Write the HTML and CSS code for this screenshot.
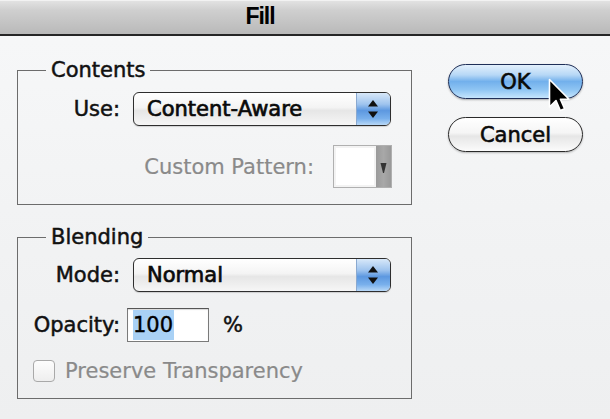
FILE: index.html
```html
<!DOCTYPE html>
<html>
<head>
<meta charset="utf-8">
<title>Fill</title>
<link rel="stylesheet" href="styles.css">
</head>
<body>
<div class="window">
  <div class="titlebar"><span class="title">Fill</span></div>
  <div class="main">
    <div class="groups">
      <fieldset class="group group-contents">
        <legend class="legend">Contents</legend>
        <div class="row">
          <span class="label">Use:</span>
          <div class="popup">
            <span class="popup-text">Content-Aware</span>
            <span class="stepper">
              <svg width="34" height="34" viewBox="0 0 34 34"><path d="M12 14.5 L17 8 L22 14.5 Z" fill="#111"/><path d="M12 19.5 L17 26 L22 19.5 Z" fill="#111"/></svg>
            </span>
          </div>
        </div>
        <div class="row row-pattern">
          <span class="label-dim">Custom Pattern:</span>
          <div class="pattern">
            <span class="swatch"></span>
            <span class="pattern-arrow">
              <svg width="15" height="41" viewBox="0 0 15 41"><path d="M4.5 17 L10.5 17 L8 27 L7 27 Z" fill="#333"/></svg>
            </span>
          </div>
        </div>
      </fieldset>
      <fieldset class="group group-blending">
        <legend class="legend">Blending</legend>
        <div class="row">
          <span class="label">Mode:</span>
          <div class="popup">
            <span class="popup-text">Normal</span>
            <span class="stepper">
              <svg width="34" height="34" viewBox="0 0 34 34"><path d="M12 14.5 L17 8 L22 14.5 Z" fill="#111"/><path d="M12 19.5 L17 26 L22 19.5 Z" fill="#111"/></svg>
            </span>
          </div>
        </div>
        <div class="row row-opacity">
          <span class="label">Opacity:</span>
          <div class="field"><span class="selected">100</span></div>
          <span class="unit">%</span>
        </div>
        <div class="row row-check">
          <span class="checkbox"></span>
          <span class="label-dim">Preserve Transparency</span>
        </div>
      </fieldset>
    </div>
    <div class="buttons">
      <button class="btn btn-ok">OK</button>
      <button class="btn btn-cancel">Cancel</button>
      <svg class="cursor" width="24" height="36" viewBox="0 0 24 36">
        <path d="M1.5 1.5 L1.5 29 L8 22.5 L12.3 32.5 L16.6 30.7 L12.4 21.2 L21 21.2 Z" fill="#000" stroke="#fff" stroke-width="1.6" stroke-linejoin="round"/>
      </svg>
    </div>
  </div>
</div>
</body>
</html>
```
FILE: styles.css
```css
* { box-sizing: border-box; }
html, body { margin: 0; padding: 0; }
body {
  width: 610px;
  height: 419px;
  overflow: hidden;
  font-family: "DejaVu Sans", "Liberation Sans", sans-serif;
  background: #f2f3f4;
}
.window {
  width: 610px;
  height: 419px;
  display: flex;
  flex-direction: column;
  background: linear-gradient(180deg, #f7f8f9 0%, #f1f2f3 60%, #eeeff0 100%);
}
.titlebar {
  height: 36px;
  flex: none;
  display: flex;
  align-items: center;
  justify-content: center;
  padding-right: 90px;
  padding-bottom: 2px;
  background: linear-gradient(180deg, #e4e4e4 0%, #cfcfcf 30%, #b9b9b9 100%);
  border-bottom: 2px solid #262626;
  box-shadow: inset 0 1px 0 #f2f2f2;
}
.title {
  font-family: "Liberation Sans", "DejaVu Sans", sans-serif;
  font-weight: bold;
  font-size: 23px;
  letter-spacing: -1px;
  color: #000;
}
.main {
  flex: 1;
  display: flex;
  align-items: flex-start;
}
.groups {
  display: flex;
  flex-direction: column;
  gap: 20px;
  padding-left: 17px;
  padding-top: 22px;
}
.group {
  margin: 0;
  width: 395px;
  border: 1px solid #6c6c6c;
  padding: 10px 19px 16px 0;
  min-width: 0;
}
.group-contents { padding-bottom: 16px; }
.group-blending { padding-top: 9px; padding-bottom: 15px; }
.legend {
  margin-left: 28px;
  padding: 0 5px;
  font-size: 21px;
  line-height: 24px;
  color: #111;
  -webkit-text-stroke: 0.5px #111;
}
.row {
  display: flex;
  align-items: center;
  gap: 13px;
}
.label {
  width: 102px;
  text-align: right;
  font-size: 21px;
  color: #111;
  -webkit-text-stroke: 0.5px #111;
  flex: none;
  white-space: nowrap;
}
.label-dim {
  font-size: 21px;
  color: #8a8a8a;
  -webkit-text-stroke: 0.2px #8a8a8a;
  white-space: nowrap;
}
.popup {
  width: 258px;
  height: 34px;
  border: 1px solid #2e2e2e;
  border-radius: 6px;
  display: flex;
  align-items: stretch;
  overflow: hidden;
  background: linear-gradient(180deg, #ffffff 0%, #f4f4f4 45%, #e6e6e6 55%, #f6f6f6 100%);
  box-shadow: 0 1px 1px rgba(0,0,0,0.15);
}
.popup-text {
  flex: 1;
  padding-left: 13px;
  display: flex;
  align-items: center;
  font-size: 21px;
  color: #0a0a0a;
  -webkit-text-stroke: 0.7px #0a0a0a;
}
.stepper {
  width: 34px;
  flex: none;
  border-left: 1px solid #8aa9d0;
  background: linear-gradient(180deg, #d8e8f9 0%, #9fc4ee 35%, #5d98e0 55%, #79b0ec 80%, #b8d8f7 100%);
  display: flex;
  align-items: center;
  justify-content: center;
}
.stepper svg { display: block; margin-left: -1px; }
.row-pattern {
  margin-top: 19px;
  justify-content: flex-end;
  gap: 19px;
}
.pattern {
  width: 59px;
  height: 43px;
  border: 1px solid #b0b0b0;
  display: flex;
  background: #fff;
}
.swatch {
  flex: 1;
  background: #fff;
  border: 2px solid #f3f3f3;
}
.pattern-arrow {
  width: 15px;
  flex: none;
  background: linear-gradient(90deg, #9a9a9a 0%, #a8a8a8 50%, #999 100%);
  display: flex;
}
.row-opacity {
  margin-top: 16px;
  gap: 7px;
}
.field {
  width: 82px;
  height: 34px;
  border: 1px solid #7a7a7a;
  border-top-color: #555;
  background: #fff;
  box-shadow: inset 0 1px 1px rgba(0,0,0,0.15);
  display: flex;
  align-items: center;
  padding-left: 5px;
}
.selected {
  background: #a9d1f5;
  font-size: 21px;
  line-height: 30px;
  color: #000;
  -webkit-text-stroke: 0.4px #000;
  padding-right: 1px;
}
.unit {
  margin-left: 7px;
  font-size: 21px;
  color: #111;
  -webkit-text-stroke: 0.5px #111;
}
.row-check {
  margin-top: 17px;
  padding-left: 15px;
  gap: 10px;
}
.checkbox {
  width: 22px;
  height: 22px;
  border: 1.5px solid #a9a9a9;
  border-radius: 4px;
  background: linear-gradient(180deg, #fdfdfd, #eeeeee);
  flex: none;
}
.buttons {
  position: relative;
  display: flex;
  flex-direction: column;
  gap: 18px;
  margin-left: 36px;
  padding-top: 28px;
}
.btn {
  width: 135px;
  height: 35px;
  border-radius: 18px;
  font-family: "DejaVu Sans", sans-serif;
  font-size: 21px;
  color: #0a0a0a;
  padding: 0;
  -webkit-text-stroke: 0.6px #0a0a0a;
}
.btn-ok {
  border: 1.5px solid #1f2f58;
  background: linear-gradient(180deg, #e3f0fc 0%, #b7d8f6 30%, #72b0ec 50%, #8fc5f3 75%, #c5e5fd 100%);
  box-shadow: 0 1px 2px rgba(0,0,0,0.3);
}
.btn-cancel {
  border: 1.5px solid #2a2a2a;
  background: linear-gradient(180deg, #ffffff 0%, #f5f5f5 45%, #e6e6e6 55%, #fbfbfb 100%);
  box-shadow: 0 1px 2px rgba(0,0,0,0.25);
}
.cursor {
  position: absolute;
  left: 100px;
  top: 42px;
}
```
